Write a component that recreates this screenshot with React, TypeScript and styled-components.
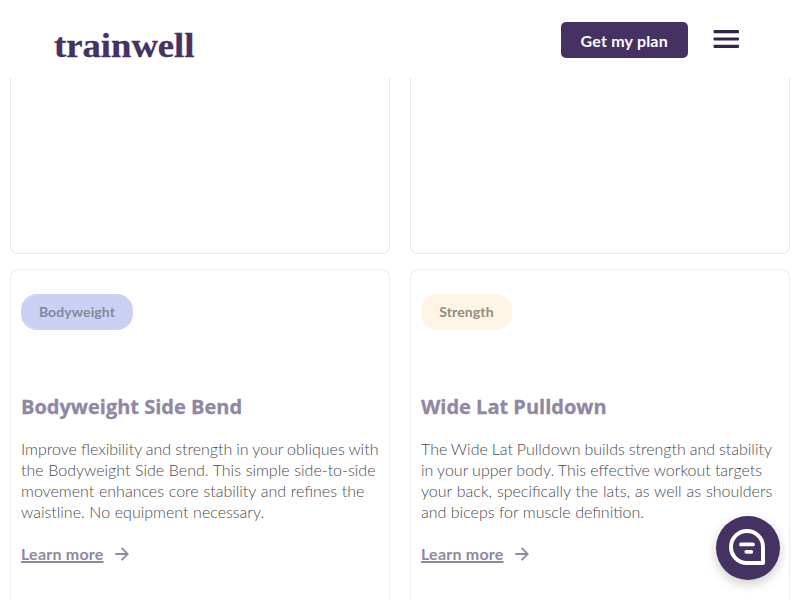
import React from 'react';
import styled, { createGlobalStyle } from 'styled-components';

const GlobalStyle = createGlobalStyle`
  *, *::before, *::after { box-sizing: border-box; }
  body { margin: 0; background: #fff; font-family: Lato, sans-serif; overflow: hidden; }
`;
const Page = styled.div`
  display: flex;
  flex-direction: column;
  height: 600px;
  overflow: hidden;
`;
const Header = styled.header`
  flex: none;
  display: flex;
  align-items: center;
  height: 78px;
  padding: 2px 61px 0 54px;
  background: #fff;
`;
const Logo = styled.svg`
  display: block;
  width: 142px;
  height: 36px;
  margin-top: 9px;
  overflow: visible;
`;
const PlanButton = styled.button`
  width: 127.5px;
  height: 36px;
  margin: 0 25px 0 auto;
  padding: 0;
  border: 0;
  border-radius: 5px;
  background: #453262;
  color: #fff;
  font: 700 16px/37px Lato, sans-serif;
  letter-spacing: 0.2px;
`;
const MenuIcon = styled.svg`
  display: block;
  width: 26px;
  height: 20px;
  margin-top: -3px;
`;
const Grid = styled.main`
  display: grid;
  grid-template-columns: 380px 380px;
  grid-template-rows: 176px 346px;
  column-gap: 20px;
  row-gap: 15px;
  padding: 0 10px;
`;
const PastCard = styled.div`
  border: 1px solid #e9e9ec;
  border-top: 0;
  border-radius: 0 0 8px 8px;
`;
const Card = styled.article`
  display: flex;
  flex-direction: column;
  align-items: flex-start;
  padding: 24px 10px 0;
  border: 1px solid #efeff1;
  border-bottom: 0;
  border-radius: 8px 8px 0 0;
`;
const Badge = styled.span<{ $tone: 'blue' | 'cream' }>`
  height: 36px;
  width: ${p => (p.$tone === 'blue' ? 112 : 91)}px;
  border-radius: 16px;
  text-align: center;
  font: 700 14px/35px Lato, sans-serif;
  letter-spacing: 0.12px;
  color: ${p => (p.$tone === 'blue' ? '#85889c' : '#8f8c87')};
  background: ${p => (p.$tone === 'blue' ? '#cbd1f3' : '#fff5e4')};
`;
const Title = styled.h3`
  margin: 63px 0 0;
  font: 700 20px/28px 'Open Sans', sans-serif;
  color: #8f87a3;
  -webkit-text-stroke: 0.3px #8f87a3;
`;
const Copy = styled.p`
  margin: 17px 0 0;
  font: 300 16px/21px Lato, sans-serif;
  color: #4a4a4d;
`;
const Line = styled.span<{ $gap: number }>`
  display: block;
  white-space: nowrap;
  word-spacing: ${p => p.$gap}px;
`;
const More = styled.a`
  display: flex;
  align-items: center;
  margin-top: 22px;
  color: #8f87a3;
`;
const MoreText = styled.span`
  height: 20px;
  font: 700 16px/20px Lato, sans-serif;
  letter-spacing: 0.22px;
  text-decoration: underline;
  text-underline-offset: 1px;
  text-decoration-thickness: 1.5px;
  text-decoration-skip-ink: none;
`;
const Arrow = styled.svg`
  width: 14px;
  height: 14px;
  margin-left: 11px;
`;
const Chat = styled.button`
  position: fixed;
  right: 20px;
  bottom: 20px;
  display: grid;
  place-items: center;
  width: 64px;
  height: 64px;
  padding: 0 2px 2px 0;
  border: 0;
  border-radius: 50%;
  background: #453262;
  box-shadow: 0 4px 12px rgba(0, 0, 0, 0.2);
`;

type Exercise = { tag: string; tone: 'blue' | 'cream'; title: string; lines: [string, number][] };
const exercises: Exercise[] = [
  {
    tag: 'Bodyweight',
    tone: 'blue',
    title: 'Bodyweight Side Bend',
    lines: [
      ['Improve flexibility and strength in your obliques with', -0.33],
      ['the Bodyweight Side Bend. This simple side-to-side', 0.3],
      ['movement enhances core stability and refines the', 0.42],
      ['waistline. No equipment necessary.', 0.3],
    ],
  },
  {
    tag: 'Strength',
    tone: 'cream',
    title: 'Wide Lat Pulldown',
    lines: [
      ['The Wide Lat Pulldown builds strength and stability', -0.43],
      ['in your upper body. This effective workout targets', -0.2],
      ['your back, specifically the lats, as well as shoulders', 0.56],
      ['and biceps for muscle definition.', 0.1],
    ],
  },
];

export default function App() {
  return (
    <Page>
      <GlobalStyle />
      <Header>
        <Logo viewBox="0 0 142 36" role="img" aria-label="trainwell">
          <text x="0" y="30" textLength="140.5" lengthAdjust="spacingAndGlyphs" fontFamily="'Liberation Serif', serif" fontWeight="700" fontSize="34" fill="#453262" stroke="#453262" strokeWidth="0.3">trainwell</text>
        </Logo>
        <PlanButton>Get my plan</PlanButton>
        <MenuIcon viewBox="0 0 26 20" fill="#30264a">
          <rect x="0.5" y="1" width="25.5" height="3.2" rx="1" />
          <rect x="0.5" y="8.4" width="25.5" height="3.2" rx="1" />
          <rect x="0.5" y="15.8" width="25.5" height="3.2" rx="1" />
        </MenuIcon>
      </Header>
      <Grid>
        <PastCard />
        <PastCard />
        {exercises.map(e => (
          <Card key={e.title}>
            <Badge $tone={e.tone}>{e.tag}</Badge>
            <Title>{e.title}</Title>
            <Copy>
              {e.lines.map(([text, gap]) => (
                <Line key={text} $gap={gap}>{text}</Line>
              ))}
            </Copy>
            <More>
              <MoreText>Learn more</MoreText>
              <Arrow viewBox="0 0 14 14" fill="none" stroke="currentColor" strokeWidth="1.8">
                <path d="M0.3 7H12.6M6.6 0.8L12.8 7L6.6 13.2" />
              </Arrow>
            </More>
          </Card>
        ))}
      </Grid>
      <Chat aria-label="Chat">
        <svg width="36" height="36" viewBox="0 0 36 36" fill="none" stroke="#fff" strokeLinecap="round" strokeLinejoin="round">
          <path d="M18 2A16 16 0 0 0 18 34H34V18A16 16 0 0 0 18 2Z" strokeWidth="4" />
          <path d="M12 15.4H24M17.3 22.8H22.3" strokeWidth="3.8" />
        </svg>
      </Chat>
    </Page>
  );
}
